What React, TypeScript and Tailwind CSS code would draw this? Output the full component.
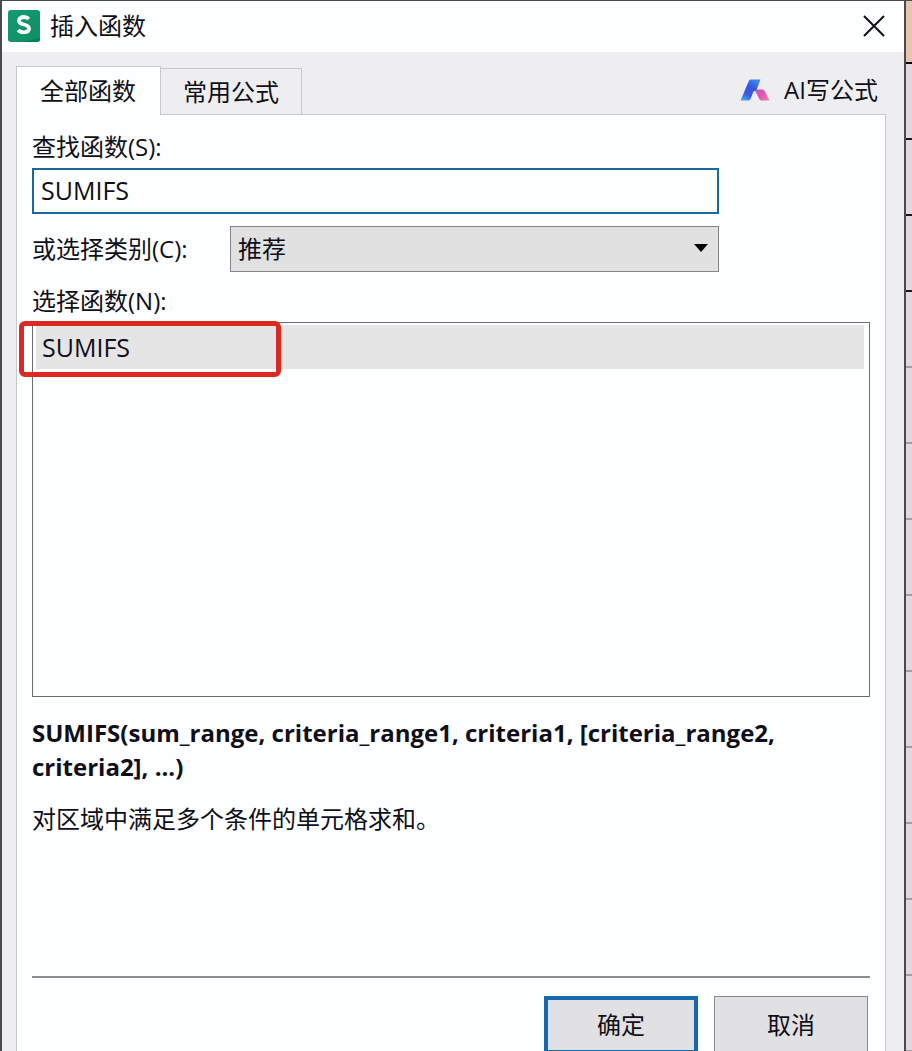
import { useState } from 'react';

const functions = [
  {
    name: 'SUMIFS',
    syntax: 'SUMIFS(sum_range, criteria_range1, criteria1, [criteria_range2, criteria2], ...)',
    description: '对区域中满足多个条件的单元格求和。',
  },
];

const tabs = ['全部函数', '常用公式'];

function LogoIcon() {
  return (
    <svg width="32" height="32" viewBox="0 0 32 32" aria-hidden="true">
      <defs>
        <linearGradient id="logo" x1="0" y1="0" x2="1" y2="1">
          <stop offset="0" stopColor="#179a70" />
          <stop offset="1" stopColor="#0c8f62" />
        </linearGradient>
      </defs>
      <rect width="32" height="32" rx="3" fill="url(#logo)" />
      <path d="M32 28V29a3 3 0 0 1-3 3H15Z" fill="#0b7d55" />
      <path
        d="M20.800 9C19.600 7.700 17.900 7 15.900 7C13 7 11 8.400 11 10.700C11 13.100 12.900 13.900 15.900 14.500C19.100 15.200 21 16.200 21 18.600C21 21 18.800 22.300 15.800 22.300C13.400 22.300 11.400 21.500 10.100 20"
        fill="none"
        stroke="#fff"
        strokeWidth="3.800"
      />
    </svg>
  );
}

function AiIcon() {
  return (
    <svg width="30" height="22" viewBox="0 0 30 22" aria-hidden="true">
      <defs>
        <linearGradient id="aiBlue" x1="0.700" y1="0" x2="0.200" y2="1">
          <stop offset="0" stopColor="#3a8df0" />
          <stop offset="0.350" stopColor="#3557e0" />
          <stop offset="0.700" stopColor="#3a58e0" />
          <stop offset="1" stopColor="#4aa0f0" />
        </linearGradient>
        <linearGradient id="aiPink" x1="0" y1="0" x2="1" y2="1">
          <stop offset="0" stopColor="#b45ad8" />
          <stop offset="0.500" stopColor="#e455ae" />
          <stop offset="1" stopColor="#f07fae" />
        </linearGradient>
      </defs>
      <path d="M14.500 10.500H22.500Q24 10.500 24.700 12L29.500 21.500H21.500Q20 21.500 19.300 20Z" fill="url(#aiPink)" />
      <path d="M9 1.500Q9.700 0.500 11 0.500H20.500L16.500 11L13.500 12.500L10.500 20Q9.900 21.500 8.400 21.500H0.500Z" fill="url(#aiBlue)" />
    </svg>
  );
}

function Sheet() {
  return (
    <div className="w-2 shrink-0 border-l-2 border-[#4a4850] bg-[#e2d9dc]">
      <div className="h-[63px] border-b-2 border-black bg-[#e9c3ae]" />
      {[0, 1, 2].map((i) => (
        <div key={i} className="h-[76px] border-b-2 border-[#1a181c]" />
      ))}
      {[0, 1, 2, 3, 4, 5, 6, 7, 8, 9].map((i) => (
        <div key={i} className="h-[76px] border-b-2 border-[#a39ca0]" />
      ))}
    </div>
  );
}

export default function App() {
  const [tab, setTab] = useState(0);
  const [query, setQuery] = useState('SUMIFS');
  const [category, setCategory] = useState('推荐');
  const [selected, setSelected] = useState(functions[0]);

  return (
    <div className="flex h-screen overflow-hidden border-t border-l-2 border-[#4a4850] font-['Open_Sans','Noto_Sans_CJK_SC',sans-serif] text-2xl text-[#100e18]">
      <div className="flex min-w-0 flex-1 flex-col bg-[#eeeef1]">
        <header className="flex h-[51px] shrink-0 items-center bg-[#fdfeff] pr-[18px] pb-[2px] pl-[6px]">
          <LogoIcon />
          <h1 className="ml-[10px] flex-1 leading-8">插入函数</h1>
          <button type="button" aria-label="关闭" className="flex size-6 items-center justify-center">
            <svg width="22" height="22" viewBox="0 0 22 22" stroke="#100e18" strokeWidth="2" aria-hidden="true">
              <path d="M1 1L21 21M21 1L1 21" />
            </svg>
          </button>
        </header>

        <div className="flex shrink-0 items-end pt-[14px] pr-[26px] pl-[14px]">
          <div role="tablist" className="z-10 -mb-px flex flex-1 items-end">
            {tabs.map((name, i) => (
              <button
                key={name}
                type="button"
                role="tab"
                aria-selected={tab === i}
                onClick={() => setTab(i)}
                className={
                  tab === i
                    ? 'h-[49px] border border-b-0 border-[#c6cacd] bg-[#fcfeff] pr-6 pl-[23px]'
                    : 'h-[47px] border border-l-0 border-[#c6cacd] bg-[#eeeef1] px-[22px]'
                }
              >
                {name}
              </button>
            ))}
          </div>
          <button type="button" className="flex h-12 items-center gap-[14px]">
            <AiIcon />
            AI写公式
          </button>
        </div>

        <main className="mr-[18px] ml-[14px] flex-1 border border-[#c6cacd] bg-[#fcfeff] px-[15px] pt-4">
          <label htmlFor="search" className="block leading-8">
            查找函数(S):
          </label>
          <input
            id="search"
            value={query}
            onChange={(e) => setQuery(e.target.value)}
            className="mt-[5px] block h-[46px] w-[82%] border-2 border-[#1b679f] bg-[#fdffff] px-[7px] pb-[2px] text-[25px] outline-none"
          />

          <div className="mt-3 flex w-[82%] items-center">
            <label htmlFor="category" className="w-[198px] shrink-0">
              或选择类别(C):
            </label>
            <div className="relative flex-1">
              <select
                id="category"
                value={category}
                onChange={(e) => setCategory(e.target.value)}
                className="block h-[46px] w-full appearance-none border border-[#85868a] bg-[#e1e1e2] px-[7px] outline-none"
              >
                <option>推荐</option>
              </select>
              <svg
                width="14"
                height="8"
                viewBox="0 0 14 8"
                aria-hidden="true"
                className="pointer-events-none absolute top-[18px] right-[11px]"
              >
                <path d="M0 0H14L7 8Z" fill="#050508" />
              </svg>
            </div>
          </div>

          <h2 id="list-label" className="mt-[13px] leading-8">
            选择函数(N):
          </h2>
          <div
            role="listbox"
            aria-labelledby="list-label"
            className="relative mt-[5px] h-[375px] border border-[#6d6e75] bg-[#fdffff] py-[2px] pr-[5px] pl-[3px]"
          >
            {functions.map((fn) => (
              <button
                key={fn.name}
                type="button"
                role="option"
                aria-selected={selected.name === fn.name}
                onClick={() => setSelected(fn)}
                className="block h-11 w-full bg-[#e5e5e6] px-[6px] pt-[2px] text-left text-[25px]"
              >
                {fn.name}
              </button>
            ))}
            {/* highlight around the match */}
            <div className="pointer-events-none absolute -top-[2px] -left-[14px] h-[56px] w-[262px] rounded-md border-[5px] border-[#dc2a22]" />
          </div>

          <p className="mt-[19px] min-h-[68px] leading-[34px] font-bold">{selected.syntax}</p>
          <p className="mt-[17px] min-h-[175px] leading-9">{selected.description}</p>

          <div className="flex justify-end gap-4 border-t-2 border-[#8d8e93] pt-[18px] pr-[2px]">
            <button type="button" className="h-[58px] w-[154px] border-4 border-[#1768ad] bg-[#e1e1e3]">
              确定
            </button>
            <button type="button" className="h-[58px] w-[154px] border border-[#88898d] bg-[#e1e1e3]">
              取消
            </button>
          </div>
        </main>
      </div>
      <Sheet />
    </div>
  );
}
